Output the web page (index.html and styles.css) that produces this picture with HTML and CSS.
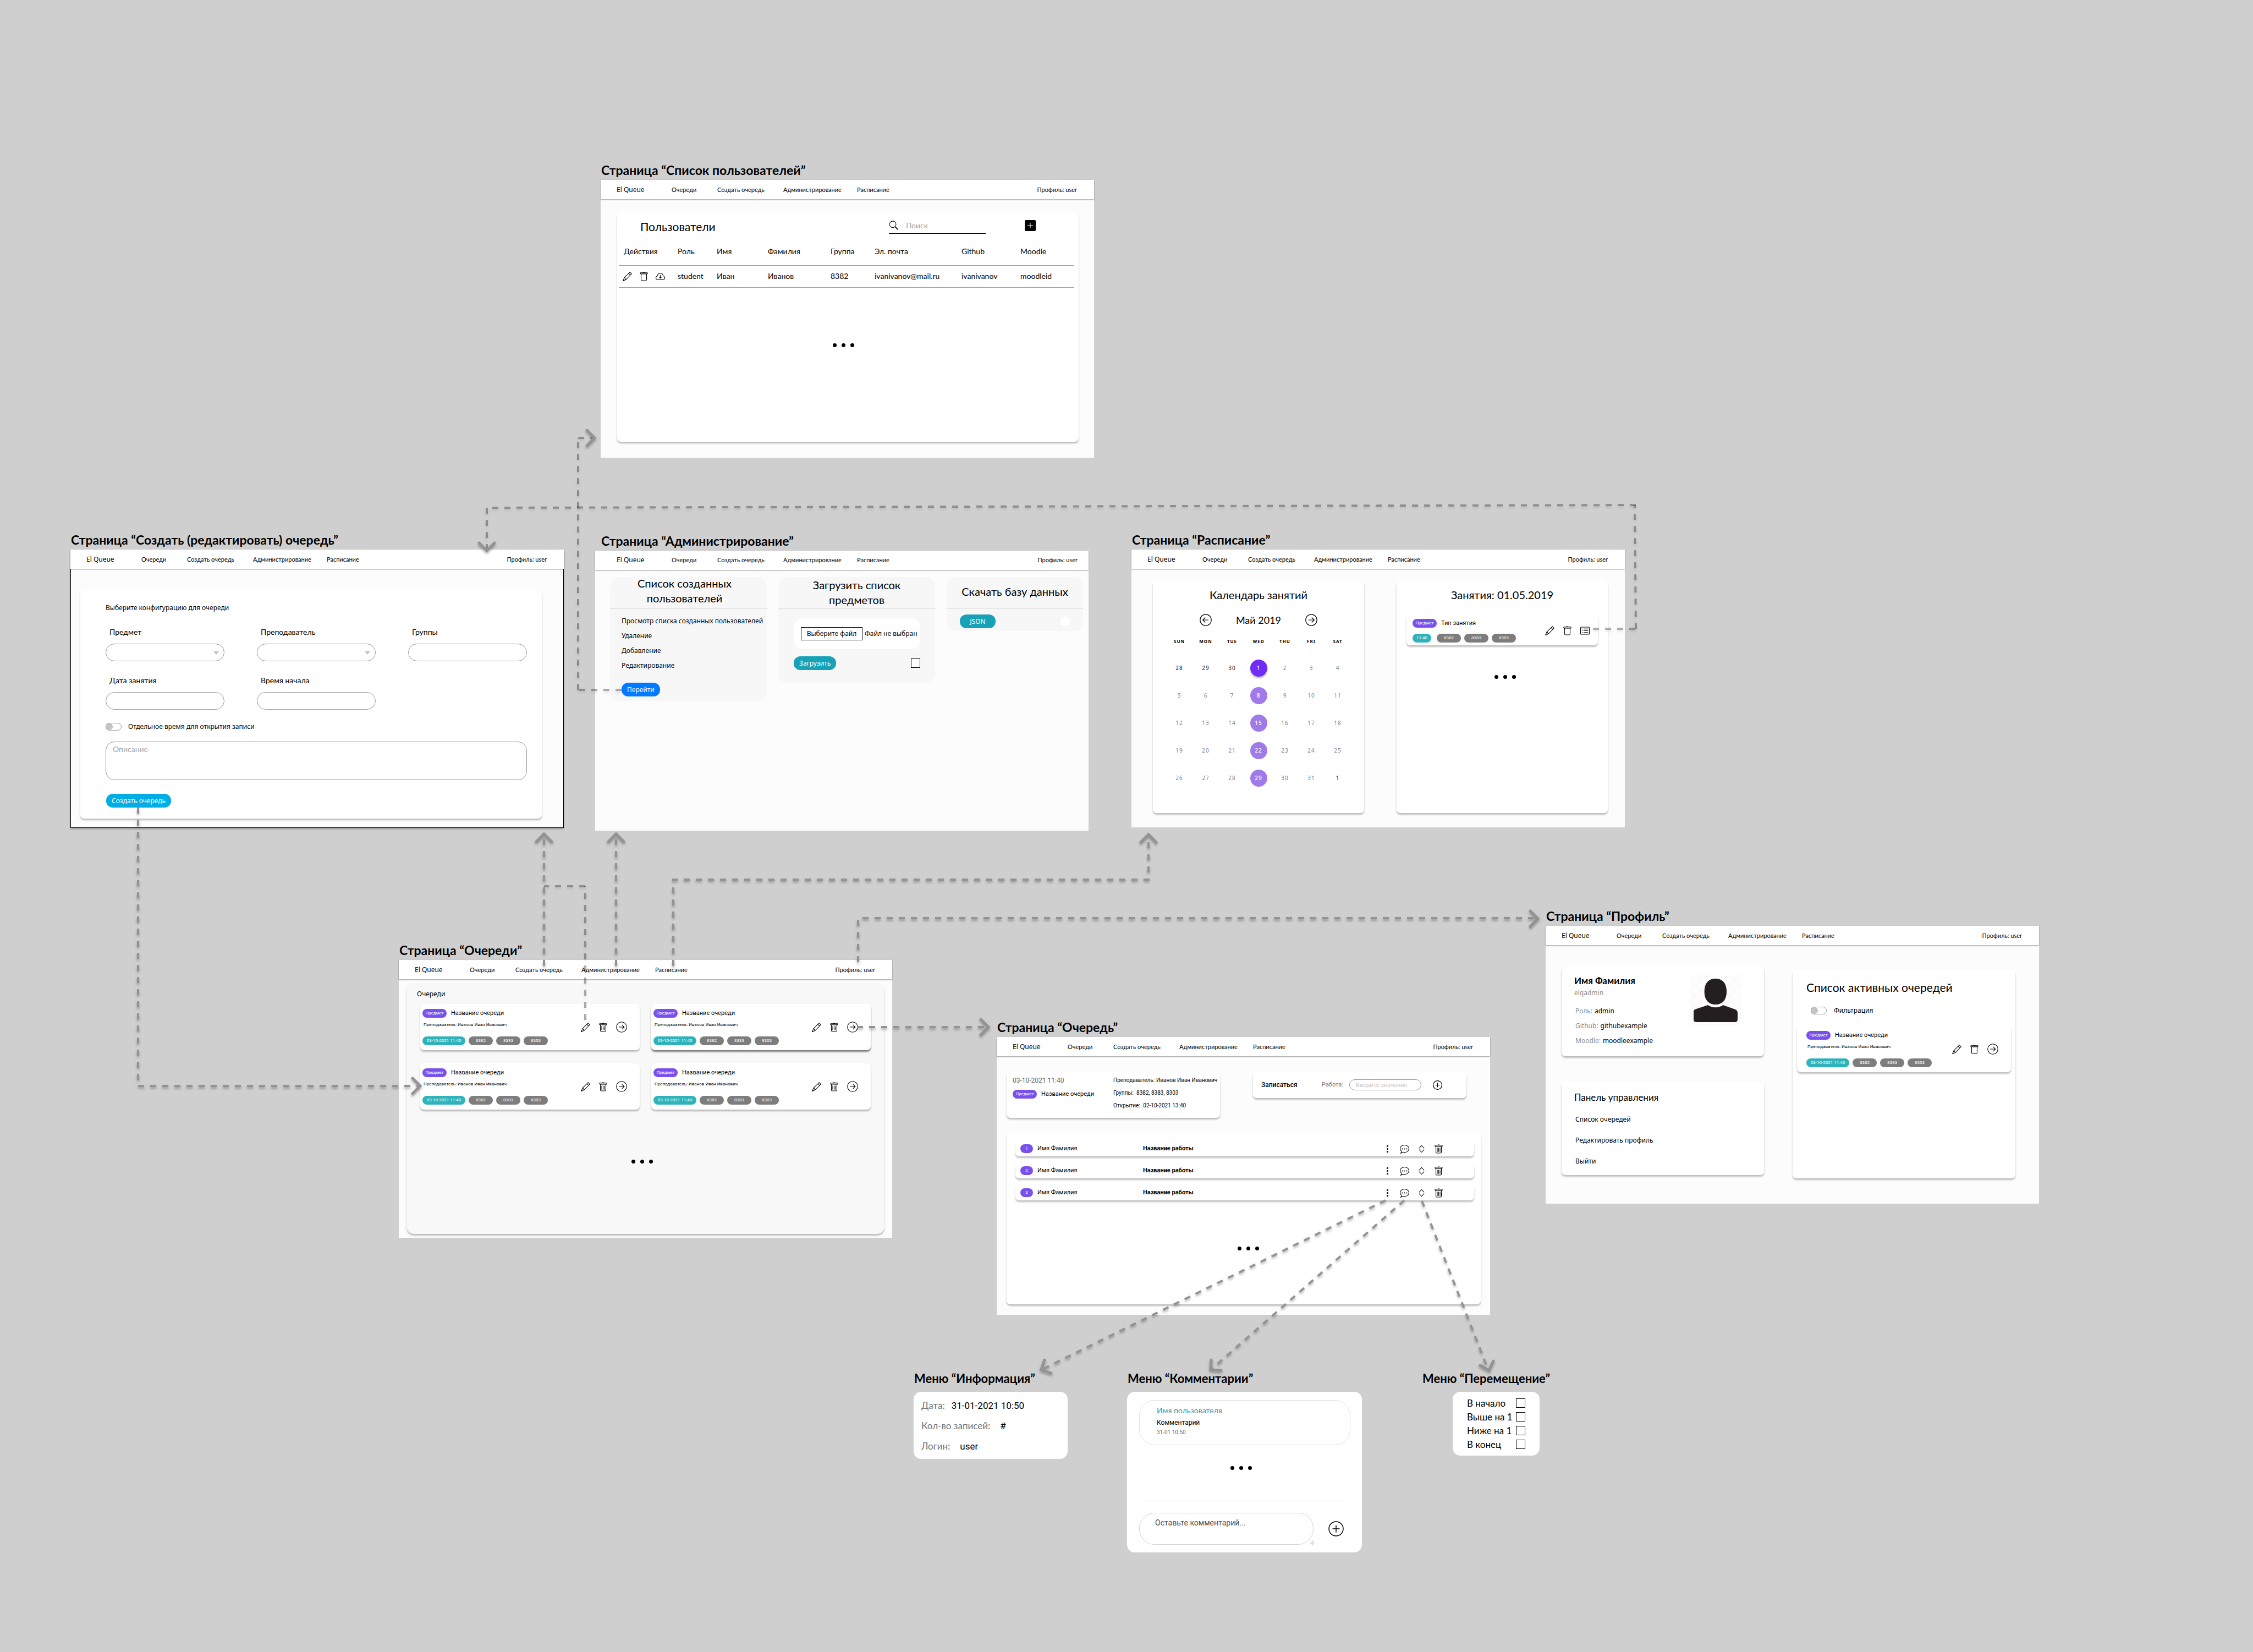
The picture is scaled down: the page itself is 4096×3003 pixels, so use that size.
FILE: index.html
```html
<!DOCTYPE html>
<html lang="ru">
<head>
<meta charset="utf-8">
<meta name="viewport" content="width=device-width, initial-scale=1">
<title>El Queue</title>
<link rel="stylesheet" href="styles.css">
</head>
<body>
<svg class="sprite" aria-hidden="true">
  <symbol id="i-pencil" viewBox="0 0 24 24"><path d="M1 23.5 4.2 15.2 18.8 1 23 5.4 8.8 19.8Z"/><path d="M4.2 15.2 6 16l.5 2 2.3 1.8M15.5 4.2l4.3 4.4"/><path class="fill" d="M.6 24l1.2-3.4L4 22.600Z"/></symbol>
  <symbol id="i-trash" viewBox="0 0 24 24"><rect x="2.700" y="2.500" width="18.600" height="3" rx=".8"/><path d="M5 5.500v15c0 1.300.8 2.200 2 2.200h10c1.200 0 2-.9 2-2.200v-15"/><rect class="fill" x="9.500" y=".6" width="5" height="2" rx=".8"/></symbol>
  <symbol id="i-trash-lines" viewBox="0 0 24 24"><rect x="2.700" y="2.500" width="18.600" height="3" rx=".8"/><path d="M5 5.500v15c0 1.300.8 2.200 2 2.200h10c1.200 0 2-.9 2-2.200v-15M8.500 9v10.500M12 9v10.500M15.500 9v10.500"/><rect class="fill" x="9.500" y=".6" width="5" height="2" rx=".8"/></symbol>
  <symbol id="i-cloud" viewBox="0 0 24 24"><path d="M6 20C2.800 20 .7 18 .7 15.200c0-2.300 1.500-4.100 4-4.700C5.300 6.600 8.300 4 12 4s6.700 2.600 7.300 6.500c2.500.6 4 2.400 4 4.700 0 2.800-2.100 4.800-5.300 4.800ZM12 8.500v8M9 13.500l3 3 3-3"/></symbol>
  <symbol id="i-go" viewBox="0 0 28 28"><circle cx="14" cy="14" r="13"/><path d="M7.500 14h13M15 8.300l5.700 5.700-5.700 5.700"/></symbol>
  <symbol id="i-back" viewBox="0 0 28 28"><circle cx="14" cy="14" r="13"/><path d="M20.500 14h-13M13 8.300 7.300 14l5.700 5.700"/></symbol>
  <symbol id="i-plus" viewBox="0 0 28 28"><circle cx="14" cy="14" r="13"/><path d="M7.500 14h13M14 7.500v13"/></symbol>
  <symbol id="i-list" viewBox="0 0 24 24"><rect x=".8" y="2.800" width="22.400" height="18.400" rx="1.500"/><path d="M8.500 7.500H20M8.500 12H20M8.500 16.500H20M4 7.500h2M4 12h2M4 16.500h2"/></symbol>
  <symbol id="i-search" viewBox="0 0 24 24"><circle cx="10" cy="9.500" r="8.300"/><path class="thick" d="M16 15.600 23 22.600"/></symbol>
  <symbol id="i-more" viewBox="0 0 24 24"><g class="fill"><circle cx="12" cy="4.500" r="2.200"/><circle cx="12" cy="12" r="2.200"/><circle cx="12" cy="19.500" r="2.200"/></g></symbol>
  <symbol id="i-chat" viewBox="0 0 24 24"><path d="M4.500 18.200C2 16.500.7 14 .7 11.300.7 6 5.700 2 12 2s11.300 4 11.300 9.300S18.300 21 12 21c-1.600 0-3-.2-4.300-.6-1.700 1.500-3.500 2.300-5.700 2.600 1.600-1.400 2.400-3 2.500-4.800Z"/><g class="fill"><circle cx="6.500" cy="12" r="1.500"/><circle cx="12" cy="12" r="1.500"/><circle cx="17.500" cy="12" r="1.500"/></g></symbol>
  <symbol id="i-sort" viewBox="0 0 24 24"><path d="M5.500 10.500 12 3.500l6.500 7M5.500 13.500l6.500 7 6.500-7"/></symbol>
</svg>

<main class="canvas">

<section class="board b-users">
  <h2 class="caption">Страница “Список пользователей”</h2>
  <div class="screen">
    <header class="topbar"><a class="logo" href="#">El Queue</a><a href="#">Очереди</a><a href="#">Создать очередь</a><a href="#">Администрирование</a><a href="#">Расписание</a><a class="me" href="#">Профиль: user</a></header>
    <div class="card users">
      <div class="users-head">
        <h3 class="t-xl">Пользователи</h3>
        <label class="search"><svg class="icon"><use href="#i-search"/></svg><input type="text" placeholder="Поиск" aria-label="Поиск"></label>
        <button class="add" aria-label="Добавить"><svg viewBox="0 0 20 20"><path d="M10 5v10M5 10h10"/></svg></button>
      </div>
      <table>
        <colgroup><col class="c1"><col class="c2"><col class="c3"><col class="c4"><col class="c5"><col class="c6"><col class="c7"><col></colgroup>
        <thead><tr><th>Действия</th><th>Роль</th><th>Имя</th><th>Фамилия</th><th>Группа</th><th>Эл. почта</th><th>Github</th><th>Moodle</th></tr></thead>
        <tbody><tr><td><span class="row-icons"><svg class="icon"><use href="#i-pencil"/></svg><svg class="icon"><use href="#i-trash"/></svg><svg class="icon"><use href="#i-cloud"/></svg></span></td><td>student</td><td>Иван</td><td>Иванов</td><td>8382</td><td>ivanivanov@mail.ru</td><td>ivanivanov</td><td>moodleid</td></tr></tbody>
      </table>
      <div class="dots"><i></i><i></i><i></i></div>
    </div>
  </div>
</section>

<section class="board b-create">
  <h2 class="caption">Страница “Создать (редактировать) очередь”</h2>
  <div class="screen outlined">
    <header class="topbar"><a class="logo" href="#">El Queue</a><a href="#">Очереди</a><a href="#">Создать очередь</a><a href="#">Администрирование</a><a href="#">Расписание</a><a class="me" href="#">Профиль: user</a></header>
    <form class="card create">
      <h3 class="t-sm">Выберите конфигурацию для очереди</h3>
      <div class="fields">
        <label class="field">Предмет<span class="select"><select><option></option></select></span></label>
        <label class="field">Преподаватель<span class="select"><select><option></option></select></span></label>
        <label class="field">Группы<input type="text"></label>
        <label class="field">Дата занятия<input type="text"></label>
        <label class="field">Время начала<input type="text"></label>
      </div>
      <label class="toggle t-sm"><input type="checkbox">Отдельное время для открытия записи</label>
      <textarea placeholder="Описание" aria-label="Описание"></textarea>
      <button class="btn sky" type="button">Создать очередь</button>
    </form>
  </div>
</section>

<section class="board b-admin">
  <h2 class="caption">Страница “Администрирование”</h2>
  <div class="screen">
    <header class="topbar"><a class="logo" href="#">El Queue</a><a href="#">Очереди</a><a href="#">Создать очередь</a><a href="#">Администрирование</a><a href="#">Расписание</a><a class="me" href="#">Профиль: user</a></header>
    <div class="tiles">
      <section class="tile people">
        <h3>Список созданных пользователей</h3>
        <ul class="t-sm"><li>Просмотр списка созданных пользователей</li><li>Удаление</li><li>Добавление</li><li>Редактирование</li></ul>
        <button class="btn blue">Перейти</button>
      </section>
      <section class="tile">
        <h3>Загрузить список предметов</h3>
        <div class="file t-sm"><button>Выберите файл</button><span>Файл не выбран</span></div>
        <div class="tile-row"><button class="btn teal">Загрузить</button><input class="tick" type="checkbox" aria-label="Загрузить список"></div>
      </section>
      <section class="tile narrow">
        <h3>Скачать базу данных</h3>
        <div class="tile-row json"><button class="btn teal">JSON</button><i class="spot"></i></div>
      </section>
    </div>
  </div>
</section>

<section class="board b-schedule">
  <h2 class="caption">Страница “Расписание”</h2>
  <div class="screen">
    <header class="topbar"><a class="logo" href="#">El Queue</a><a href="#">Очереди</a><a href="#">Создать очередь</a><a href="#">Администрирование</a><a href="#">Расписание</a><a class="me" href="#">Профиль: user</a></header>
    <div class="schedule">
      <section class="card calendar">
        <h3 class="t-lg">Календарь занятий</h3>
        <div class="month"><svg class="icon-lg"><use href="#i-back"/></svg><span>Май 2019</span><svg class="icon-lg"><use href="#i-go"/></svg></div>
        <table class="days">
          <thead><tr><th>SUN</th><th>MON</th><th>TUE</th><th>WED</th><th>THU</th><th>FRI</th><th>SAT</th></tr></thead>
          <tbody>
            <tr><td class="out">28</td><td class="out">29</td><td class="out">30</td><td><b class="on">1</b></td><td>2</td><td>3</td><td>4</td></tr>
            <tr><td>5</td><td>6</td><td>7</td><td><b>8</b></td><td>9</td><td>10</td><td>11</td></tr>
            <tr><td>12</td><td>13</td><td>14</td><td><b>15</b></td><td>16</td><td>17</td><td>18</td></tr>
            <tr><td>19</td><td>20</td><td>21</td><td><b>22</b></td><td>23</td><td>24</td><td>25</td></tr>
            <tr><td>26</td><td>27</td><td>28</td><td><b>29</b></td><td>30</td><td>31</td><td class="out">1</td></tr>
          </tbody>
        </table>
      </section>
      <section class="card lessons">
        <h3 class="t-lg">Занятия: 01.05.2019</h3>
        <article class="card lesson">
          <div class="q-info">
            <p class="q-name"><span class="pill violet">Предмет</span>Тип занятия</p>
            <p class="q-tags"><span class="pill cyan">11:40</span><span class="pill">8382</span><span class="pill">8383</span><span class="pill">8303</span></p>
          </div>
          <div class="q-icons"><svg class="icon"><use href="#i-pencil"/></svg><svg class="icon"><use href="#i-trash"/></svg><svg class="icon"><use href="#i-list"/></svg></div>
        </article>
        <div class="dots"><i></i><i></i><i></i></div>
      </section>
    </div>
  </div>
</section>

<section class="board b-queues">
  <h2 class="caption">Страница “Очереди”</h2>
  <div class="screen">
    <header class="topbar"><a class="logo" href="#">El Queue</a><a href="#">Очереди</a><a href="#">Создать очередь</a><a href="#">Администрирование</a><a href="#">Расписание</a><a class="me" href="#">Профиль: user</a></header>
    <div class="card queues">
      <h3 class="t-sm">Очереди</h3>
      <div class="q-grid">
        <article class="card q-card">
          <div class="q-info">
            <p class="q-name"><span class="pill violet">Предмет</span>Название очереди</p>
            <p class="q-teacher">Преподаватель: Иванов Иван Иванович</p>
            <p class="q-tags"><span class="pill cyan">03-10-2021 11:40</span><span class="pill">8382</span><span class="pill">8383</span><span class="pill">8303</span></p>
          </div>
          <div class="q-icons"><svg class="icon"><use href="#i-pencil"/></svg><svg class="icon"><use href="#i-trash-lines"/></svg><svg class="icon-md"><use href="#i-go"/></svg></div>
        </article>
        <article class="card q-card strong">
          <div class="q-info">
            <p class="q-name"><span class="pill violet">Предмет</span>Название очереди</p>
            <p class="q-teacher">Преподаватель: Иванов Иван Иванович</p>
            <p class="q-tags"><span class="pill cyan">03-10-2021 11:40</span><span class="pill">8382</span><span class="pill">8383</span><span class="pill">8303</span></p>
          </div>
          <div class="q-icons"><svg class="icon"><use href="#i-pencil"/></svg><svg class="icon"><use href="#i-trash-lines"/></svg><svg class="icon-md"><use href="#i-go"/></svg></div>
        </article>
        <article class="card q-card">
          <div class="q-info">
            <p class="q-name"><span class="pill violet">Предмет</span>Название очереди</p>
            <p class="q-teacher">Преподаватель: Иванов Иван Иванович</p>
            <p class="q-tags"><span class="pill cyan">03-10-2021 11:40</span><span class="pill">8382</span><span class="pill">8383</span><span class="pill">8303</span></p>
          </div>
          <div class="q-icons"><svg class="icon"><use href="#i-pencil"/></svg><svg class="icon"><use href="#i-trash-lines"/></svg><svg class="icon-md"><use href="#i-go"/></svg></div>
        </article>
        <article class="card q-card">
          <div class="q-info">
            <p class="q-name"><span class="pill violet">Предмет</span>Название очереди</p>
            <p class="q-teacher">Преподаватель: Иванов Иван Иванович</p>
            <p class="q-tags"><span class="pill cyan">03-10-2021 11:40</span><span class="pill">8382</span><span class="pill">8383</span><span class="pill">8303</span></p>
          </div>
          <div class="q-icons"><svg class="icon"><use href="#i-pencil"/></svg><svg class="icon"><use href="#i-trash-lines"/></svg><svg class="icon-md"><use href="#i-go"/></svg></div>
        </article>
      </div>
      <div class="dots"><i></i><i></i><i></i></div>
    </div>
  </div>
</section>

<section class="board b-queue">
  <h2 class="caption">Страница “Очередь”</h2>
  <div class="screen">
    <header class="topbar"><a class="logo" href="#">El Queue</a><a href="#">Очереди</a><a href="#">Создать очередь</a><a href="#">Администрирование</a><a href="#">Расписание</a><a class="me" href="#">Профиль: user</a></header>
    <div class="queue">
      <div class="queue-top">
        <section class="card about">
          <div class="about-main"><time>03-10-2021 11:40</time><p class="q-name"><span class="pill violet">Предмет</span>Название очереди</p></div>
          <dl><div><dt>Преподаватель:</dt><dd>Иванов Иван Иванович</dd></div><div><dt>Группы:&nbsp;</dt><dd>8382, 8383, 8303</dd></div><div><dt>Открытие:&nbsp;</dt><dd>02-10-2021 13:40</dd></div></dl>
        </section>
        <form class="card join">
          <strong>Записаться</strong>
          <label>Работа:<input type="text" placeholder="Введите значение"></label>
          <svg class="icon"><use href="#i-plus"/></svg>
        </form>
      </div>
      <div class="card members">
        <ol>
          <li class="card"><span class="pill violet">1</span><span class="who">Имя Фамилия</span><b>Название работы</b><span class="m-icons"><svg class="icon"><use href="#i-more"/></svg><svg class="icon"><use href="#i-chat"/></svg><svg class="icon"><use href="#i-sort"/></svg><svg class="icon"><use href="#i-trash-lines"/></svg></span></li>
          <li class="card"><span class="pill violet">2</span><span class="who">Имя Фамилия</span><b>Название работы</b><span class="m-icons"><svg class="icon"><use href="#i-more"/></svg><svg class="icon"><use href="#i-chat"/></svg><svg class="icon"><use href="#i-sort"/></svg><svg class="icon"><use href="#i-trash-lines"/></svg></span></li>
          <li class="card"><span class="pill violet">3</span><span class="who">Имя Фамилия</span><b>Название работы</b><span class="m-icons"><svg class="icon"><use href="#i-more"/></svg><svg class="icon"><use href="#i-chat"/></svg><svg class="icon"><use href="#i-sort"/></svg><svg class="icon"><use href="#i-trash-lines"/></svg></span></li>
        </ol>
        <div class="dots"><i></i><i></i><i></i></div>
      </div>
    </div>
  </div>
</section>

<section class="board b-profile">
  <h2 class="caption">Страница “Профиль”</h2>
  <div class="screen">
    <header class="topbar"><a class="logo" href="#">El Queue</a><a href="#">Очереди</a><a href="#">Создать очередь</a><a href="#">Администрирование</a><a href="#">Расписание</a><a class="me" href="#">Профиль: user</a></header>
    <div class="profile">
      <div class="profile-left">
        <section class="card person">
          <div>
            <h3>Имя Фамилия</h3>
            <p class="login t-sm">elqadmin</p>
            <dl class="t-sm"><div><dt>Роль:</dt><dd>admin</dd></div><div><dt>Github:</dt><dd>githubexample</dd></div><div><dt>Moodle:</dt><dd>moodleexample</dd></div></dl>
          </div>
          <svg class="avatar" viewBox="0 0 92 92"><defs><pattern id="hatch" width="4" height="4" patternUnits="userSpaceOnUse"><path d="M0 4 4 0" stroke="#f3f3f3"/></pattern></defs><rect width="92" height="92" fill="url(#hatch)"/><path d="M6 78V67c0-2 .6-3.600 2-5L32 54c3.400 2.700 8.600 4.200 13.800 4.200S56.200 56.700 59.600 54L82 62c2.600 1.300 4 3.300 4 6.300V80c0 3-1.800 5-4.800 5H11c-3.200 0-5-2-5-5Z" fill="#231f20"/><path d="M45.800 6C57 6 66 13 66 29.500S57 53 45.800 53 25.600 46 25.600 29.500 34.600 6 45.800 6Z" fill="#231f20"/></svg>
        </section>
        <nav class="card panel">
          <h3>Панель управления</h3>
          <a href="#">Список очередей</a><a href="#">Редактировать профиль</a><a href="#">Выйти</a>
        </nav>
      </div>
      <section class="card active">
        <h3 class="t-xl">Список активных очередей</h3>
        <label class="toggle t-sm"><input type="checkbox">Фильтрация</label>
        <article class="card q-card">
          <div class="q-info">
            <p class="q-name"><span class="pill violet">Предмет</span>Название очереди</p>
            <p class="q-teacher">Преподаватель: Иванов Иван Иванович</p>
            <p class="q-tags"><span class="pill cyan">03-10-2021 11:40</span><span class="pill">8382</span><span class="pill">8383</span><span class="pill">8303</span></p>
          </div>
          <div class="q-icons"><svg class="icon"><use href="#i-pencil"/></svg><svg class="icon"><use href="#i-trash"/></svg><svg class="icon-md"><use href="#i-go"/></svg></div>
        </article>
      </section>
    </div>
  </div>
</section>

<section class="board m-info">
  <h2 class="caption small">Меню “Информация”</h2>
  <dl class="menu info"><div><dt>Дата:</dt><dd>31-01-2021 10:50</dd></div><div><dt>Кол-во записей:</dt><dd>#</dd></div><div><dt>Логин:</dt><dd>user</dd></div></dl>
</section>

<section class="board m-comments">
  <h2 class="caption small">Меню “Комментарии”</h2>
  <div class="menu comments">
    <article class="bubble"><a href="#">Имя пользователя</a><p>Комментарий</p><time>31-01 10:50</time></article>
    <div class="dots"><i></i><i></i><i></i></div>
    <form class="reply">
      <textarea placeholder="Оставьте комментарий..." aria-label="Комментарий"></textarea>
      <svg class="grip" viewBox="0 0 8 8"><path d="M1 8 8 1M5 8 8 5"/></svg>
      <svg class="icon-xl"><use href="#i-plus"/></svg>
    </form>
  </div>
</section>

<section class="board m-move">
  <h2 class="caption small">Меню “Перемещение”</h2>
  <div class="menu move">
    <label>В начало<input class="tick" type="checkbox"></label>
    <label>Выше на 1<input class="tick" type="checkbox"></label>
    <label>Ниже на 1<input class="tick" type="checkbox"></label>
    <label>В конец<input class="tick" type="checkbox"></label>
  </div>
</section>

<svg class="links" aria-hidden="true">
  <g class="soft">
    <path d="M1130 1254H1051"/><path d="M1051 1254V796"/><path d="M1051 796H1082"/>
    <path d="M2896 1143H2975"/><path d="M2974 1143 2972 918"/><path d="M2974 918 885 923"/><path d="M885 923V1000"/>
    <path d="M1064 1854V1611"/><path d="M1064 1611H989"/>
  </g>
  <g class="solid">
    <path d="M251 1468V1974"/><path d="M251 1974H764"/>
    <path d="M989 1756V1518"/><path d="M1120 1756V1518"/>
    <path d="M1224 1756V1599H2088V1520"/>
    <path d="M1560 1749V1669H2796"/><path d="M1558 1867H1796"/>
    <path d="M2519 2182 1893 2490"/><path d="M2553 2182 2201 2490"/><path d="M2585 2183 2706 2491"/>
  </g>
  <g class="tips">
    <path d="M1067 782 1081 796 1067 810"/><path d="M871 987 885 1001 899 987"/>
    <path d="M750 1960 764 1974 750 1988"/><path d="M975 1530 989 1516 1003 1530"/><path d="M1106 1530 1120 1516 1134 1530"/>
    <path d="M2074 1531 2088 1517 2102 1531"/><path d="M2782 1656 2796 1670 2782 1684"/><path d="M1783 1853 1797 1867 1783 1881"/>
    <path d="M1899 2472 1893 2490 1911 2496"/><path d="M2202 2472 2201 2490 2220 2491"/><path d="M2691 2482 2707 2491 2715 2474"/>
  </g>
</svg>
</main>
</body>
</html>
```
FILE: styles.css
```css
:root{
  --round:Lato,"Noto Sans",sans-serif;
  --small:"Noto Sans","Open Sans",sans-serif;
  --plain:Roboto,"Liberation Sans",sans-serif;
  --shadow:0 3px 3px rgba(0,0,0,.25);
}
*{box-sizing:border-box}
body{margin:0;background:#cfcfcf;color:#000;font:14px/20px var(--round)}
h2,h3,p,ul,ol,dl,dd{margin:0;padding:0;font-weight:400;list-style:none}
a{color:inherit;text-decoration:none}
button,input,select,textarea{font:inherit;color:inherit;margin:0;padding:0;border:0;background:none;outline:0}
textarea{display:block;resize:none;overflow:hidden}
.sprite{display:none}

.canvas{position:relative;min-height:100vh;overflow:hidden}
.board{position:absolute;width:897px}
.b-users{left:1092px;top:295px}
.b-create{left:128px;top:967px}
.b-admin{left:1082px;top:969px}
.b-schedule{left:2057px;top:967px}
.b-queues{left:725px;top:1713px}
.b-queue{left:1812px;top:1853px}
.b-profile{left:2810px;top:1651px}
.m-info{left:1661px;top:2492px;width:280px}
.m-comments{left:2049px;top:2492px;width:427px}
.m-move{left:2585px;top:2492px;width:240px}
.caption{padding:0 1px 4px;font-size:23px;line-height:28px;font-weight:700;white-space:nowrap}
.caption.small{padding-bottom:10px;font-size:22px}
.b-admin .caption{padding-left:11px}

.screen{min-height:505px;background:#fcfcfc}
.outlined{box-shadow:inset 1px 0 #000,inset -1px 0 #000,0 1px #000,0 3px 3px rgba(0,0,0,.3)}
.b-admin .screen{min-height:509px}
.topbar{display:grid;grid-template-columns:100px 83px 120px 134px 1fr auto;align-items:center;height:35px;padding:0 31px 0 29px;background:#fff;box-shadow:0 1px 2px rgba(0,0,0,.4);font-size:11px;line-height:16px}
.b-admin .topbar{padding:0 20px 2px 39px}
.logo{font:12px/16px var(--small)}

.t-sm{font:12px/16px var(--small)}
.t-lg{font-size:20px;line-height:28px}
.t-xl{font-size:21px;line-height:28px}

.card{background:#fff;border-radius:7px;box-shadow:var(--shadow)}
.icon,.icon-md,.icon-lg,.icon-xl{flex:none;display:block;width:17px;height:17px;fill:none;stroke:#000;stroke-width:1.500}
.icon-md{width:20px;height:20px}
.icon-lg{width:22px;height:22px}
.icon-xl{width:28px;height:28px}
.fill{fill:#000;stroke:none}
.thick{stroke-width:2.500}
.dots{display:flex;justify-content:center;gap:9px}
.dots i{width:7px;height:7px;border-radius:50%;background:#000}

.pill{display:inline-flex;align-items:center;justify-content:center;flex:none;min-width:44px;height:16px;border-radius:8px;background:#7d7d7d;color:#fff;font:8px/16px var(--plain)}
.violet{background:#7950ec}
.cyan{background:#2eb3bb}
.btn{display:block;height:25px;padding:0 10px;border-radius:12px;color:#fff;font:12px/25px var(--small)}
.sky{background:#00ade4}
.blue{background:#007bff}
.teal{background:#17a2b8}
.tick{appearance:none;flex:none;width:17px;height:17px;border:1px solid #000;background:#fff}
.toggle{display:flex;align-items:center;gap:12px}
.toggle input{appearance:none;width:29px;height:14px;border:1px solid #999;border-radius:7px;background:radial-gradient(circle at 6px 6px,#c4c4c4 6px,transparent 6px)}

/* users */
.users{margin:25px 28px 0 30px;height:416px;padding:0 9px 0 3px}
.users-head{display:flex;align-items:center;height:46px;padding:0 69px 0 39px}
.users-head h3{margin-right:auto;padding-top:4px}
.search{display:flex;align-items:center;gap:14px;width:176px;height:30px;margin-right:71px;border-bottom:1px solid #000}
.search input{width:120px}
::placeholder{color:#a5a5a5;opacity:1}
.add{width:20px;height:20px;border-radius:2px;background:#000}
.add svg{display:block;fill:none;stroke:#fff;stroke-width:1}
.users table{width:100%;border-collapse:collapse;table-layout:fixed}
.users th,.users td{padding:0 0 0 1px;text-align:left;font-weight:400;border-bottom:1px solid #999}
.users th{height:49px}
.users td{height:40px}
.users th:first-child{padding-left:9px}
.users td:first-child{padding-left:7px}
.c1{width:106px}.c2{width:71px}.c3{width:93px}.c4{width:114px}.c5{width:80px}.c6{width:158px}.c7{width:107px}
.row-icons{display:flex;gap:13px}
.users .dots{margin:101px 10px 0 0}

/* create */
.create{margin:38px 40px 0 18px;height:416px;padding:25px 0 0 46px}
.fields{display:grid;grid-template-columns:repeat(3,216px);gap:25px 59px;margin-top:26px}
.field{display:flex;flex-direction:column;gap:11px;line-height:20px;text-indent:7px}
.field input,.select select{display:block;width:216px;height:32px;border:1px solid #999;border-radius:16px;background:#fff;appearance:none;text-indent:0}
.select{position:relative;height:32px;text-indent:0}
.select::after{content:"";position:absolute;right:10px;top:14px;border:5px solid transparent;border-top:6px solid #c4c4c4;border-bottom:0}
.create .toggle{margin-top:23px;height:16px}
.create textarea{width:766px;height:70px;margin-top:19px;padding:3px 12px;border:1px solid #999;border-radius:16px}
.create .btn{margin:25px 0 0 1px}

/* admin */
.tiles{display:flex;align-items:flex-start;gap:21px;padding:13px 0 0 27px}
.tile{width:285px;padding-bottom:8px;background:#f7f7f7;border-radius:16px}
.tile.narrow{width:248px;padding-bottom:4px}
.tile h3{display:flex;align-items:center;justify-content:center;height:58px;padding:0 50px 2px;border-bottom:1px solid #ddd;text-align:center;font-size:20px;line-height:27px}
.tile.narrow h3{padding:0 0 4px}
.people h3{padding:0 64px 8px 50px}
.tile ul{display:grid;gap:11px;padding:14px 0 0 21px;white-space:nowrap}
.tile .blue{margin:23px 0 0 21px}
.file{display:flex;align-items:center;gap:4px;height:56px;margin:17px 27px 13px 28px;padding-left:13px;border-radius:16px;background:#fff;white-space:nowrap}
.file button{width:112px;height:24px;border:1px solid #000}
.tile-row{display:flex;align-items:center;justify-content:space-between;padding:0 27px 15px 28px}
.json{padding:10px 24px 1px}
.json .btn{width:65px}
.spot{width:18px;height:18px;border-radius:50%;background:#fff}

/* schedule */
.schedule{display:grid;grid-template-columns:384px 384px;gap:59px;padding:22px 0 0 39px}
.schedule>.card{height:422px;padding-top:11px;text-align:center}
.month{display:flex;align-items:center;justify-content:space-between;width:214px;height:28px;margin:18px auto 0;font-size:18px}
.days{margin:17px auto 0;border-collapse:collapse;font:10px/16px var(--small);letter-spacing:1px}
.days th{width:48px;height:16px;padding:0;font-size:8px;font-weight:700}
.days td{width:48px;height:50px;padding:0;color:#7e818c}
.days tbody::before{content:"";display:block;height:15px}
.days .out{color:#3d404a;font-weight:500}
.days b{display:flex;align-items:center;justify-content:center;width:31px;height:31px;margin:0 auto;border-radius:50%;background:#9f7ae8;color:#fff;font-weight:500}
.days .on{background:#6f2df6;box-shadow:var(--shadow)}
.lesson{display:flex;align-items:center;width:348px;height:56px;margin:22px 0 0 18px;padding:2px 15px 0 11px;text-align:left}
.lesson .q-info{gap:11px}
.lesson .cyan{min-width:34px;margin-right:4px}
.lessons .dots{margin:54px 0 0 10px}

/* queue cards */
.q-info{display:flex;flex-direction:column}
.q-name{display:flex;align-items:center;gap:8px;font:11px/16px var(--plain)}
.q-teacher{padding-left:2px;font:8px/10px var(--plain)}
.q-tags{display:flex;gap:6px}
.q-icons{display:flex;align-items:center;gap:15px;margin-left:auto}
.q-card{display:flex;align-items:center;height:84px;padding:0 23px 0 4px}
.q-card .q-info{gap:0}
.q-card .q-teacher{margin:8px 0 16px}
.q-card .cyan{min-width:78px}
.q-card .q-icons{gap:15px}
.strong{box-shadow:0 3px 3px rgba(0,0,0,.5)}
.queues{margin:7px 14px 0;height:456px;padding:12px 25px 0;border-radius:14px;background:#f8f8f8}
.queues h3{text-indent:-6px;margin-bottom:10px}
.q-grid{display:grid;grid-template-columns:1fr 1fr;gap:24px 21px}
.queues .dots{margin:91px 12px 0 0}

/* queue */
.queue{padding:28px 17px 0 18px}
.queue-top{display:flex;align-items:flex-start;gap:60px}
.about{display:flex;width:388px;height:84px;padding:8px 11px}
.about-main{flex:none;width:183px}
.about time{display:block;margin-bottom:9px;color:#666;font:12px/16px var(--plain)}
.about dl{display:grid;gap:7px;align-content:start;white-space:nowrap;font:10px/16px var(--plain)}
.about dl div{display:flex;gap:3px}
.join{display:flex;align-items:center;width:388px;height:48px;padding:0 15px;font:11px/16px var(--plain)}
.join strong{width:110px;font-size:12px;font-weight:500}
.join label{display:flex;align-items:center;gap:11px;color:#777}
.join input{width:131px;height:20px;padding:0 11px;border:1px solid #999;border-radius:10px}
.join ::placeholder{color:#ccc6c6}
.join .icon{margin-left:21px;stroke-width:2}
.members{height:312px;margin-top:27px;padding:15px 12px 0 16px}
.members ol{display:grid;gap:12px}
.members li{display:flex;align-items:center;height:28px;padding-left:9px;font:11px/16px var(--plain)}
.members li .pill{min-width:23px;margin-right:8px}
.who{width:192px}
.members b{font-weight:700}
.m-icons{display:flex;gap:14px;margin-left:auto;padding-right:56px}
.members .dots{margin:84px 0 0 12px}

/* profile */
.profile{display:flex;gap:52px;padding:38px 0 0 29px}
.profile-left{display:grid;align-content:start;gap:46px;width:368px}
.person{display:flex;justify-content:space-between;height:164px;padding:17px 42px 0 23px}
.person h3{font-size:17px;line-height:20px;font-weight:700}
.login{margin-top:4px;color:#8a8a8a}
.person dl{display:grid;gap:11px;padding:17px 0 0 2px}
.person dl div{display:flex;gap:4px}
.person dt{color:#8a8a8a}
.avatar{width:92px;height:92px}
.panel{display:grid;align-content:start;gap:22px;height:170px;padding:19px 23px;font:12px/16px var(--small)}
.panel h3{font:17px/20px var(--round)}
.panel a{padding-left:2px}
.active{width:405px;height:379px;margin-top:7px;padding:18px 8px 0}
.active h3{padding-left:17px}
.active .toggle{margin:20px 0 0 25px;gap:13px}
.active .q-card{margin-top:20px;padding-left:17px}

/* menus */
.menu{background:#fff;border-radius:14px;font-size:17px;line-height:20px}
.info{display:grid;gap:17px;padding:15px 14px;height:122px}
.info div{display:flex;gap:12px}
.info div+div{gap:18px}
.info dt{color:#6c757d}
.info dd{font-family:var(--plain)}
.comments{height:292px;padding:15px 21px 0 22px}
.bubble{height:82px;padding:8px 31px;border:1px solid #dee2e6;border-radius:28px;font:12px/24px var(--plain)}
.bubble a{display:block;color:#17a2b8;font:14px/20px var(--round)}
.bubble time{display:block;margin-top:-2px;color:#6c757d;font-size:10px;line-height:16px}
.bubble p{line-height:24px}
.comments .dots{margin:38px 14px 56px 0}
.reply{display:flex;align-items:center;padding-top:21px;border-top:1px solid #dee2e6}
.reply textarea{width:317px;height:58px;padding:7px 28px;border:1px solid #ced4da;border-radius:28px;font:14px/20px var(--plain)}
.grip{align-self:flex-end;width:8px;height:8px;margin:0 27px 0 -8px;stroke:#777}
.reply ::placeholder{color:#495057}
.move{display:grid;gap:8px;width:158px;height:116px;margin-left:56px;padding:12px 26px}
.move label{display:flex;align-items:center;justify-content:space-between;height:17px;white-space:nowrap}

/* connectors */
.links{position:absolute;inset:0;width:100%;height:100%;pointer-events:none;fill:none;stroke-width:4;filter:drop-shadow(0 3px 2px rgba(0,0,0,.3))}
.soft{stroke:rgba(30,30,30,.34);stroke-dasharray:11}
.solid{stroke:#939393;stroke-dasharray:11}
.tips{stroke:#939393;stroke-width:5;stroke-linecap:round}
```
